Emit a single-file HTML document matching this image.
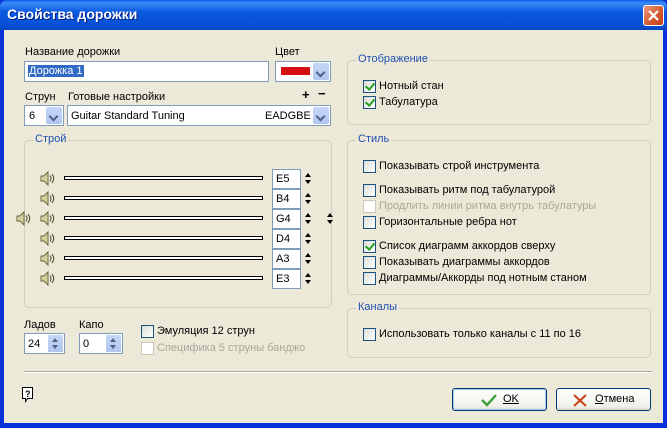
<!DOCTYPE html>
<html><head><meta charset="utf-8"><style>
*{margin:0;padding:0;box-sizing:border-box}
body{width:667px;height:428px;overflow:hidden;background:#0831d9;font-family:"Liberation Sans","DejaVu Sans",sans-serif;font-size:11px;color:#000;position:relative}
.a{position:absolute}
#title{left:0;top:0;width:667px;height:30px;background:linear-gradient(#0a5fe8 0%,#3c8cf8 10%,#0a58e0 40%,#0752d6 80%,#0846c0 100%);border-radius:7px 7px 0 0}
#tt{left:7px;top:6px;color:#fff;font-weight:bold;font-size:14px;text-shadow:1px 1px #0a1f80}
#close{left:643px;top:5px;width:21px;height:21px;border:1px solid #fff;border-radius:3px;background:linear-gradient(135deg,#e89a80,#d5582c 60%,#c04020)}
#body{left:4px;top:30px;width:659px;height:393px;background:#ece9d8}
.lbl{position:absolute;white-space:nowrap}
.inp{position:absolute;background:#fff;border:1px solid #7f9db9}
.dd{position:absolute;right:1px;top:1px;bottom:1px;width:16px;background:linear-gradient(#c6d6f8,#b0c6f0);border-radius:2px}
.dd:after{content:"";position:absolute;left:4px;top:6px;width:5px;height:5px;border-right:2px solid #4d6185;border-bottom:2px solid #4d6185;transform:rotate(45deg)}
.grp{position:absolute;border:1px solid #d0d0bf;border-radius:5px}
.gl{position:absolute;top:-8px;left:8px;background:#ece9d8;color:#1f4fb0;padding:0 2px}
.cb{position:absolute;width:13px;height:13px;border:1px solid #1c5180;background:linear-gradient(135deg,#dcdcd7,#fff)}
.cb.dis{border-color:#cac8bb;background:#fff}
.ck:after{content:"";position:absolute;left:3px;top:0px;width:4px;height:7px;border-right:2px solid #21a121;border-bottom:2px solid #21a121;transform:rotate(40deg)}
.gray{color:#aca899}
.sl{position:absolute;left:64px;width:199px;height:4px;border:1px solid #000;background:#fff}
.nb{position:absolute;left:272px;width:29px;height:20px;background:#fff;border:1px solid #7f9db9;padding:3px 0 0 3px;font-size:11px}
.sp{position:absolute;width:7px;height:11px}
.sp:before{content:"";position:absolute;left:0;top:0;border-left:3.5px solid transparent;border-right:3.5px solid transparent;border-bottom:4px solid #000}
.sp:after{content:"";position:absolute;left:0;bottom:0;border-left:3.5px solid transparent;border-right:3.5px solid transparent;border-top:4px solid #000}
.btn{position:absolute;height:23px;border:1px solid #003c74;border-radius:3px;background:linear-gradient(#fff,#f0f0ea 85%,#d6d0c5)}
.ud{position:absolute;right:1px;top:1px;bottom:1px;width:15px;background:linear-gradient(#c6d6f8,#b0c6f0)}
.ud:before{content:"";position:absolute;left:4px;top:3px;border-left:3.5px solid transparent;border-right:3.5px solid transparent;border-bottom:4px solid #4d6185}
.ud:after{content:"";position:absolute;left:4px;bottom:3px;border-left:3.5px solid transparent;border-right:3.5px solid transparent;border-top:4px solid #4d6185}
</style></head><body>
<div id="title" class="a"></div>
<div id="tt" class="a">Свойства дорожки</div>
<div id="close" class="a"><svg width="19" height="19" viewBox="0 0 19 19"><path d="M5 5L14 14M14 5L5 14" stroke="#fff" stroke-width="2.2"/></svg></div>
<div id="body" class="a"></div>

<div class="lbl" style="left:25px;top:46px">Название дорожки</div>
<div class="inp" style="left:24px;top:61px;width:245px;height:21px"><span style="position:absolute;left:3px;top:3px;background:#316ac5;color:#fff;padding:0 1px">Дорожка 1</span></div>
<div class="lbl" style="left:275px;top:46px">Цвет</div>
<div class="inp" style="left:275px;top:61px;width:56px;height:21px"><div class="a" style="left:5px;top:5px;width:29px;height:8px;background:#d40f0f"></div><div class="dd"></div></div>

<div class="lbl" style="left:25px;top:91px">Струн</div>
<div class="lbl" style="left:68px;top:91px">Готовые настройки</div>
<div class="lbl" style="left:302px;top:87px;font-weight:bold;font-size:13px">+</div>
<div class="lbl" style="left:318px;top:86px;font-weight:bold;font-size:13px">−</div>
<div class="inp" style="left:24px;top:105px;width:40px;height:21px"><span class="a" style="left:4px;top:4px">6</span><div class="dd"></div></div>
<div class="inp" style="left:67px;top:105px;width:264px;height:21px"><span class="a" style="left:3px;top:4px">Guitar Standard Tuning</span><span class="a" style="left:197px;top:4px">EADGBE</span><div class="dd"></div></div>

<div class="grp" style="left:24px;top:140px;width:308px;height:168px"><span class="gl">Строй</span></div>

<svg class="a" style="left:0;top:0" width="340" height="300">
<defs><g id="spk"><path d="M1 4h3l4-4v13l-4-4H1z" fill="#d8d2a0" stroke="#6b6640" stroke-width="1"/><path d="M10 3.5q2 3 0 6M12 2q3.5 4.5 0 9" fill="none" stroke="#5a5838" stroke-width="1.1"/></g></defs>
<use href="#spk" x="40" y="172"/><use href="#spk" x="40" y="192"/><use href="#spk" x="40" y="212"/><use href="#spk" x="40" y="232"/><use href="#spk" x="40" y="252"/><use href="#spk" x="40" y="272"/><use href="#spk" x="16" y="212"/>
</svg>
<div class="sl" style="top:176px"></div><div class="sl" style="top:196px"></div><div class="sl" style="top:216px"></div><div class="sl" style="top:236px"></div><div class="sl" style="top:256px"></div><div class="sl" style="top:276px"></div>
<div class="nb" style="top:169px">E5</div><div class="nb" style="top:189px">B4</div><div class="nb" style="top:209px">G4</div><div class="nb" style="top:229px">D4</div><div class="nb" style="top:249px">A3</div><div class="nb" style="top:269px">E3</div>
<div class="sp" style="left:305px;top:173px"></div><div class="sp" style="left:305px;top:193px"></div><div class="sp" style="left:305px;top:213px"></div><div class="sp" style="left:305px;top:233px"></div><div class="sp" style="left:305px;top:253px"></div><div class="sp" style="left:305px;top:273px"></div><div class="sp" style="left:327px;top:213px"></div>

<div class="lbl" style="left:24px;top:319px">Ладов</div>
<div class="lbl" style="left:79px;top:319px">Капо</div>
<div class="inp" style="left:24px;top:333px;width:41px;height:21px"><span class="a" style="left:3px;top:4px">24</span><div class="ud"></div></div>
<div class="inp" style="left:79px;top:333px;width:44px;height:21px"><span class="a" style="left:3px;top:4px">0</span><div class="ud"></div></div>
<div class="cb" style="left:141px;top:325px"></div><div class="lbl" style="left:157px;top:325px">Эмуляция 12 струн</div>
<div class="cb dis" style="left:141px;top:342px"></div><div class="lbl gray" style="left:157px;top:342px">Специфика 5 струны банджо</div>

<div class="grp" style="left:347px;top:60px;width:304px;height:65px"><span class="gl">Отображение</span></div>
<div class="cb ck" style="left:363px;top:80px"></div><div class="lbl" style="left:379px;top:80px">Нотный стан</div>
<div class="cb ck" style="left:363px;top:96px"></div><div class="lbl" style="left:379px;top:96px">Табулатура</div>

<div class="grp" style="left:347px;top:140px;width:304px;height:155px"><span class="gl">Стиль</span></div>
<div class="cb" style="left:363px;top:160px"></div><div class="lbl" style="left:379px;top:160px">Показывать строй инструмента</div>
<div class="cb" style="left:363px;top:184px"></div><div class="lbl" style="left:379px;top:184px">Показывать ритм под табулатурой</div>
<div class="cb dis" style="left:363px;top:200px"></div><div class="lbl gray" style="left:379px;top:200px">Продлить линии ритма внутрь табулатуры</div>
<div class="cb" style="left:363px;top:216px"></div><div class="lbl" style="left:379px;top:216px">Горизонтальные ребра нот</div>
<div class="cb ck" style="left:363px;top:240px"></div><div class="lbl" style="left:379px;top:240px">Список диаграмм аккордов сверху</div>
<div class="cb" style="left:363px;top:256px"></div><div class="lbl" style="left:379px;top:256px">Показывать диаграммы аккордов</div>
<div class="cb" style="left:363px;top:272px"></div><div class="lbl" style="left:379px;top:272px">Диаграммы/Аккорды под нотным станом</div>

<div class="grp" style="left:347px;top:308px;width:304px;height:50px"><span class="gl">Каналы</span></div>
<div class="cb" style="left:363px;top:328px"></div><div class="lbl" style="left:379px;top:328px">Использовать только каналы с 11 по 16</div>

<div class="a" style="left:24px;top:371px;width:628px;height:2px;border-top:1px solid #aca899;border-bottom:1px solid #fff"></div>
<svg class="a" style="left:20px;top:386px" width="16" height="18"><path d="M2.5 1.5h10v11h-5l-2 3v-3h-3z" fill="#fff" stroke="#000"/><text x="5" y="11" font-size="9" font-weight="bold" font-family="Liberation Sans">?</text></svg>

<div class="btn" style="left:452px;top:388px;width:95px;border-color:#003c74;box-shadow:inset 0 0 0 1px #a8c4f0"><svg class="a" style="left:27px;top:4px" width="18" height="14"><path d="M2 7l5 5L16 2" fill="none" stroke="#3ca03c" stroke-width="2.4"/></svg><span class="a" style="left:50px;top:4px;text-decoration:underline">OK</span></div>
<div class="btn" style="left:556px;top:388px;width:95px"><svg class="a" style="left:15px;top:4px" width="16" height="15"><path d="M2 2L14 13M14 2L2 13" stroke="#c84820" stroke-width="2.2"/></svg><span class="a" style="left:38px;top:4px"><u>О</u>тмена</span></div>
</body></html>
